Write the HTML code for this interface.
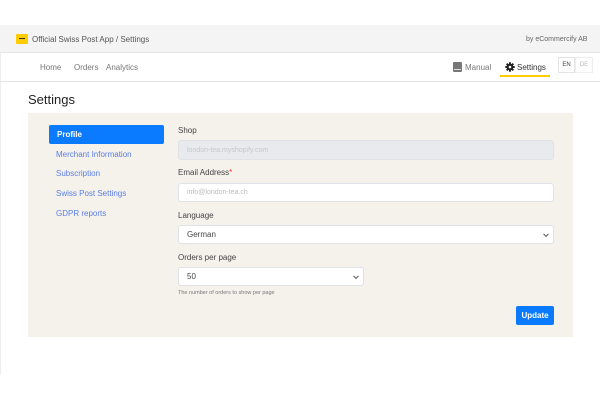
<!DOCTYPE html>
<html><head><meta charset="utf-8"><style>
*{box-sizing:border-box;margin:0;padding:0}
body{width:600px;height:400px;background:#fff;font-family:"Liberation Sans",Arial,sans-serif;position:relative;overflow:hidden}
.a{position:absolute}
.t{position:absolute;white-space:nowrap}
.inp{position:absolute;background:#fff;border:1px solid #dfe2e6;border-radius:3px;font-size:7px;color:#bbb;padding-left:8px;display:flex;align-items:center}
.lab{position:absolute;font-size:8px;color:#444}
.side{position:absolute;left:56px;font-size:8px;color:#5a7de6}
.chev{position:absolute;right:5px;top:50%;width:4px;height:4px;border-right:1px solid #555;border-bottom:1px solid #555;transform:translateY(-70%) rotate(45deg)}
</style></head><body>
<div class="a" style="left:0;top:25px;width:1px;height:350px;background:#eee"></div>
<div class="a" style="left:0;top:25px;width:600px;height:28px;background:#f4f4f4;border-bottom:1px solid #e6e6e6"></div>
<div class="a" style="left:16px;top:34px;width:12px;height:10px;background:#fc0;border-radius:1px"><div class="a" style="left:3px;top:4px;width:6px;height:1px;background:#333"></div></div>
<div class="t" style="left:32px;top:35px;font-size:8px;color:#555">Official Swiss Post App / Settings</div>
<div class="t" style="left:526px;top:36px;font-size:7px;color:#666">by eCommercify AB</div>
<div class="a" style="left:0;top:53px;width:600px;height:29px;border-bottom:1px solid #e3e3e3"></div>
<div class="t" style="left:40px;top:63px;font-size:8px;color:#777">Home</div>
<div class="t" style="left:74px;top:63px;font-size:8px;color:#777">Orders</div>
<div class="t" style="left:106px;top:63px;font-size:8px;color:#777">Analytics</div>
<div class="a" style="left:453px;top:62px;width:9px;height:10px;background:#777;border-radius:1px"><div class="a" style="left:1px;top:7px;width:7px;height:1px;background:#ddd"></div></div>
<div class="t" style="left:465px;top:63px;font-size:8px;color:#777">Manual</div>
<svg class="a" style="left:505px;top:62px" width="10" height="10" viewBox="0 0 10 10"><g fill="#222"><circle cx="5" cy="5" r="3.3"/><rect x="4" y="0.3" width="2" height="9.4"/><rect x="0.3" y="4" width="9.4" height="2"/><rect x="4" y="0.3" width="2" height="9.4" transform="rotate(45 5 5)"/><rect x="4" y="0.3" width="2" height="9.4" transform="rotate(-45 5 5)"/></g><circle cx="5" cy="5" r="1.3" fill="#fff"/></svg>
<div class="t" style="left:517px;top:63px;font-size:8px;color:#333">Settings</div>
<div class="a" style="left:500px;top:75px;width:50px;height:2px;background:#fc0"></div>
<div class="a" style="left:558px;top:57px;width:17px;height:16px;border:1px solid #e3e3e3;font-size:6px;color:#444;text-align:center;line-height:14px">EN</div>
<div class="a" style="left:575px;top:57px;width:18px;height:16px;border:1px solid #eee;font-size:6px;color:#bbb;text-align:center;line-height:14px">DE</div>
<div class="t" style="left:28px;top:92px;font-size:13px;color:#222">Settings</div>
<div class="a" style="left:28px;top:113px;width:545px;height:224px;background:#f5f2ec"></div>
<div class="a" style="left:49px;top:125px;width:115px;height:19px;background:#0a7bfe;border-radius:2px;color:#fff;font-size:8px;font-weight:bold;padding:5px 0 0 8px">Profile</div>
<div class="side" style="top:150px">Merchant Information</div>
<div class="side" style="top:169px">Subscription</div>
<div class="side" style="top:189px">Swiss Post Settings</div>
<div class="side" style="top:209px">GDPR reports</div>
<div class="lab" style="left:178px;top:126px">Shop</div>
<div class="inp" style="left:178px;top:140px;width:376px;height:20px;background:#e8eaed;color:#c4c7cc">london-tea.myshopify.com</div>
<div class="lab" style="left:178px;top:168px">Email Address<span style="color:#e33">*</span></div>
<div class="inp" style="left:178px;top:183px;width:376px;height:19px">info@london-tea.ch</div>
<div class="lab" style="left:178px;top:211px">Language</div>
<div class="inp" style="left:178px;top:225px;width:376px;height:19px;color:#444;font-size:8px">German<div class="chev"></div></div>
<div class="lab" style="left:178px;top:253px">Orders per page</div>
<div class="inp" style="left:178px;top:267px;width:186px;height:19px;color:#444;font-size:8px">50<div class="chev"></div></div>
<div class="t" style="left:178px;top:290px;font-size:5.5px;color:#777">The number of orders to show per page</div>
<div class="a" style="left:516px;top:306px;width:38px;height:19px;background:#0a7bfe;border-radius:2px;color:#fff;font-size:8px;font-weight:bold;text-align:center;line-height:19px">Update</div>
</body></html>
